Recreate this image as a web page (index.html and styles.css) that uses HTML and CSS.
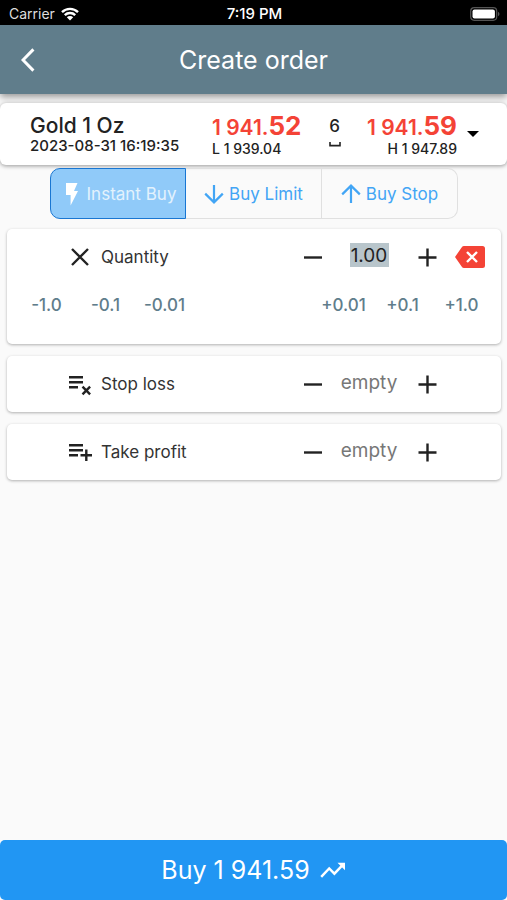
FILE: index.html
```
<!DOCTYPE html>
<html lang="en">
<head>
    <meta charset="UTF-8">
    <meta name="viewport" content="width=device-width, initial-scale=1.0">
    <title>Create order</title>
    <link rel="stylesheet" href="styles.css">
</head>
<body>
    <div class="status-bar">
        <span class="carrier">
            Carrier
            <svg class="wifi" viewBox="0 0 18 14">
                <path d="M1 5.2a11.4 11.4 0 0 1 16 0M3.8 8.2a7.4 7.4 0 0 1 10.4 0" fill="none" stroke="#fff" stroke-width="2.4"/>
                <path d="M5.8 10.3a4.6 4.6 0 0 1 6.4 0L9 13.6z" fill="#fff"/>
            </svg>
        </span>
        <span class="clock">7:19 PM</span>
        <svg class="battery" viewBox="0 0 30 14">
            <rect x="0.7" y="0.7" width="26" height="12.6" rx="3.5" fill="none" stroke="#555" stroke-width="1.2"/>
            <rect x="2.5" y="2.5" width="22.4" height="9" rx="2" fill="#fff"/>
            <path d="M28 4.8c2 .8 2 3.6 0 4.4z" fill="#555"/>
        </svg>
    </div>

    <header class="app-bar">
        <button class="back" type="button" aria-label="Back">
            <svg viewBox="0 0 14 24"><path d="M12.4 1.4 2 12l10.4 10.6" fill="none" stroke="#fff" stroke-width="3"/></svg>
        </button>
        <h1 class="title">Create order</h1>
    </header>

    <main class="content">
        <section class="quote">
            <div class="instrument">
                <div class="name">Gold 1 Oz</div>
                <div class="time">2023-08-31 16:19:35</div>
            </div>
            <div class="price">
                <div class="value">1 941.<b>52</b></div>
                <div class="extreme">L 1 939.04</div>
            </div>
            <div class="spread">
                <span>6</span>
                <svg viewBox="0 0 12 5"><path d="M1 0v3.6h10V0" fill="none" stroke="#222" stroke-width="1.6"/></svg>
            </div>
            <div class="price ask">
                <div class="value">1 941.<b>59</b></div>
                <div class="extreme">H 1 947.89</div>
            </div>
            <button class="expand" type="button" aria-label="Select instrument">
                <svg viewBox="0 0 12 6"><path d="M0 0h12L6 6z"/></svg>
            </button>
        </section>

        <div class="order-types">
            <button class="order-type active" type="button">
                <svg class="bolt" viewBox="0 0 14 24"><path d="M1 1h11.5L9 9h4L5.600 23.5V13H1z" fill="currentColor"/></svg>
                Instant Buy
            </button>
            <button class="order-type" type="button">
                <svg viewBox="0 0 20 20"><path d="M10 1v17M1.2 9.6 10 18.4l8.8-8.8" fill="none" stroke="currentColor" stroke-width="2.2"/></svg>
                Buy Limit
            </button>
            <button class="order-type" type="button">
                <svg viewBox="0 0 20 20"><path d="M10 19V2M1.2 10.4 10 1.6l8.8 8.8" fill="none" stroke="currentColor" stroke-width="2.2"/></svg>
                Buy Stop
            </button>
        </div>

        <section class="card">
            <div class="field">
                <svg class="field-icon" viewBox="0 0 24 24"><path d="m4 4 16 16M20 4 4 20" stroke="#222" stroke-width="2.4"/></svg>
                <label for="quantity">Quantity</label>
                <button class="step" type="button" aria-label="Decrease quantity">
                    <svg viewBox="0 0 24 24"><path d="M3 12.500h18" stroke="#222" stroke-width="2.4"/></svg>
                </button>
                <div class="input-box"><input class="selected" id="quantity" type="text" value="1.00"></div>
                <button class="step" type="button" aria-label="Increase quantity">
                    <svg viewBox="0 0 24 24"><path d="M3.500 12.500h18M12.500 3.500v18" stroke="#222" stroke-width="2.4"/></svg>
                </button>
                <button class="clear" type="button" aria-label="Clear quantity">
                    <svg viewBox="0 0 30 22"><path d="M9 0h18.500Q30 0 30 2.500v17Q30 22 27.500 22H9Q7.600 22 6.800 20.800L0 11 6.800 1.200Q7.600 0 9 0z" fill="#f44336"/><path d="m12 6 10 10M22 6 12 16" stroke="#fff" stroke-width="2.4"/></svg>
                </button>
            </div>
            <div class="presets">
                <div class="preset-group">
                    <button type="button">-1.0</button>
                    <button type="button">-0.1</button>
                    <button type="button">-0.01</button>
                </div>
                <div class="preset-group">
                    <button type="button">+0.01</button>
                    <button type="button">+0.1</button>
                    <button type="button">+1.0</button>
                </div>
            </div>
        </section>

        <section class="card">
            <div class="field">
                <svg class="field-icon" viewBox="0 0 24 24"><path d="M1 5.200h14M1 10.200h14M1 15.200h9M14.500 14.700l7.600 7.600M22.100 14.700l-7.600 7.600" fill="none" stroke="#222" stroke-width="2.4"/></svg>
                <label for="stop-loss">Stop loss</label>
                <button class="step" type="button" aria-label="Decrease stop loss">
                    <svg viewBox="0 0 24 24"><path d="M3 12.500h18" stroke="#222" stroke-width="2.4"/></svg>
                </button>
                <div class="input-box"><input id="stop-loss" type="text" placeholder="empty"></div>
                <button class="step" type="button" aria-label="Increase stop loss">
                    <svg viewBox="0 0 24 24"><path d="M3.500 12.500h18M12.500 3.500v18" stroke="#222" stroke-width="2.4"/></svg>
                </button>
            </div>
        </section>

        <section class="card">
            <div class="field">
                <svg class="field-icon" viewBox="0 0 24 24"><path d="M1 5.200h14M1 10.200h14M1 15.200h9M12.500 15.200H24M18.300 9.500v11.500" fill="none" stroke="#222" stroke-width="2.4"/></svg>
                <label for="take-profit">Take profit</label>
                <button class="step" type="button" aria-label="Decrease take profit">
                    <svg viewBox="0 0 24 24"><path d="M3 12.500h18" stroke="#222" stroke-width="2.4"/></svg>
                </button>
                <div class="input-box"><input id="take-profit" type="text" placeholder="empty"></div>
                <button class="step" type="button" aria-label="Increase take profit">
                    <svg viewBox="0 0 24 24"><path d="M3.500 12.500h18M12.500 3.500v18" stroke="#222" stroke-width="2.4"/></svg>
                </button>
            </div>
        </section>
    </main>

    <button class="submit" type="button">
        Buy 1 941.59
        <svg viewBox="0 0 26 16"><path d="m1.200 14.800 8-8.300 5.200 5.200 8.600-9" fill="none" stroke="#fff" stroke-width="2.4"/><path d="M17.500 .8H25v7.500z" fill="#fff"/></svg>
    </button>
</body>
</html>
```
FILE: styles.css
```
:root {
    --bar: #607d8b;
    --blue: #2196f3;
    --link: #42a5f5;
    --red: #f44336;
    --text: #222;
    --line: #e0e0e0;
}

* {
    box-sizing: border-box;
}

body {
    display: flex;
    flex-direction: column;
    min-height: 100vh;
    margin: 0;
    background: #fafafa;
    color: var(--text);
    font-family: Inter, Roboto, sans-serif;
    font-size: 17px;
}

button {
    padding: 0;
    border: none;
    background: none;
    color: inherit;
    font: inherit;
    cursor: pointer;
}

svg {
    display: block;
    flex: none;
}

.status-bar {
    display: grid;
    grid-template-columns: 1fr auto 1fr;
    align-items: center;
    height: 25px;
    padding: 2px 7px 0 9px;
    background: #000;
    color: #fff;
    font-size: 14px;
}

.carrier {
    display: flex;
    align-items: center;
    gap: 6px;
    color: #ddd;
}

.wifi {
    width: 18px;
    height: 14px;
}

.clock {
    font-size: 15px;
    font-weight: 500;
}

.battery {
    width: 30px;
    height: 14px;
    justify-self: end;
}

.app-bar {
    display: grid;
    grid-template-columns: 56px 1fr 56px;
    align-items: center;
    height: 69px;
    background: var(--bar);
    color: #fff;
    box-shadow: 0 3px 7px rgba(0, 0, 0, 0.4);
}

.back svg {
    width: 14px;
    height: 24px;
    margin: 0 auto;
}

.title {
    margin: 0;
    font-size: 25px;
    font-weight: 400;
    text-align: center;
}

.content {
    flex: 1;
    padding-top: 9px;
}

.quote {
    display: grid;
    grid-template-columns: 1fr 91px 63px 91px 22px;
    align-items: center;
    height: 62px;
    padding: 0 28px 0 30px;
    border-radius: 6px;
    background: #fff;
    box-shadow: 0 1px 4px rgba(0, 0, 0, 0.4);
}

.name {
    font-size: 21px;
    font-weight: 500;
    line-height: 24px;
}

.time {
    font-size: 15px;
    font-weight: 500;
    line-height: 16px;
}

.value {
    color: var(--red);
    font-size: 21px;
    font-weight: 600;
    line-height: 28px;
    white-space: nowrap;
}

.value b {
    font-size: 26px;
    font-weight: 700;
}

.extreme {
    font-size: 14px;
    font-weight: 500;
    line-height: 14px;
}

.ask {
    text-align: right;
}

.spread {
    display: flex;
    flex-direction: column;
    align-items: center;
    gap: 5px;
    padding-bottom: 6px;
    font-size: 17px;
    font-weight: 500;
    line-height: 22px;
}

.spread svg {
    width: 12px;
    height: 5px;
}

.expand svg {
    width: 12px;
    height: 6px;
    margin-left: auto;
}

.order-types {
    display: grid;
    grid-template-columns: repeat(3, minmax(0, 1fr));
    margin: 3px 49px 10px 50px;
}

.order-type {
    display: flex;
    align-items: center;
    justify-content: center;
    gap: 5px;
    height: 51px;
    border: 1px solid var(--line);
    border-left: none;
    color: var(--link);
    font-size: 17px;
}

.order-type:first-child {
    border-radius: 10px 0 0 10px;
}

.order-type:last-child {
    border-radius: 0 10px 10px 0;
}

.order-type svg {
    width: 20px;
    height: 20px;
}

.order-type .bolt {
    width: 14px;
    height: 24px;
    color: #fff;
}

.order-type.active {
    gap: 8px;
    padding-left: 5px;
    border: 1px solid #1976d2;
    background: #90caf9;
    color: #e3f2fd;
}

.card {
    margin: 0 6px 12px 7px;
    border-radius: 5px;
    background: #fff;
    box-shadow: 0 1px 3px rgba(0, 0, 0, 0.3);
}

.field {
    display: grid;
    grid-template-columns: 24px 1fr 24px 90px 24px 62px;
    align-items: center;
    height: 56px;
    padding-left: 61px;
}

.field-icon {
    width: 24px;
    height: 24px;
}

.field label {
    padding-left: 9px;
    color: #333;
}

.step svg {
    width: 24px;
    height: 24px;
}

.input-box {
    padding: 0 2px 4px 0;
    text-align: center;
}

.input-box input {
    width: 70px;
    height: 24px;
    padding: 0;
    border: none;
    outline: none;
    background: none;
    color: var(--text);
    font-family: inherit;
    font-size: 19px;
    text-align: center;
}

.input-box .selected {
    width: 39px;
    background: #b8c5cb;
}

.input-box input::placeholder {
    color: #777;
}

.clear svg {
    width: 30px;
    height: 22px;
    margin: 0 auto;
}

.presets {
    display: flex;
    justify-content: space-between;
    padding: 0 10px 19px;
}

.preset-group {
    display: flex;
}

.preset-group button {
    width: 59px;
    height: 40px;
    color: var(--bar);
    font-weight: 500;
}

.submit {
    display: flex;
    align-items: center;
    justify-content: center;
    gap: 10px;
    height: 60px;
    border-radius: 5px;
    background: var(--blue);
    color: #fff;
    font-size: 25px;
}

.submit svg {
    width: 26px;
    height: 16px;
}
```
